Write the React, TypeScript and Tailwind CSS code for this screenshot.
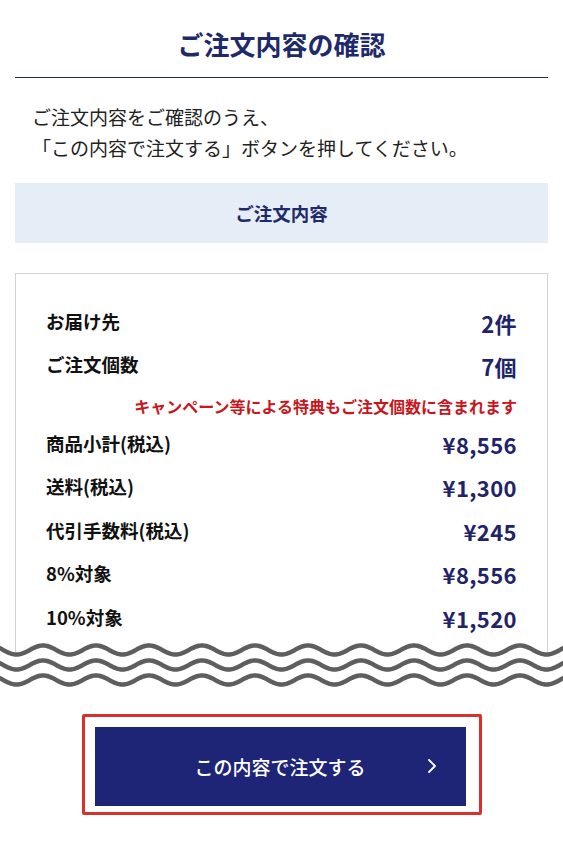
import React from "react";

const FONT = { fontFamily: '"Noto Sans CJK JP", "Noto Sans", sans-serif' };

function wavePath(cy: number, width: number, A: number, P: number, x0: number) {
  const pts: string[] = [];
  for (let x = -4; x <= width + 4; x += 1) {
    const y = cy - A * Math.cos((2 * Math.PI * (x - x0)) / P);
    pts.push(`${x === -4 ? "M" : "L"}${x.toFixed(1)},${y.toFixed(2)}`);
  }
  return pts.join(" ");
}

function Wave() {
  const W = 563;
  const A = 4.5;
  const P = 53;
  const x0 = 43;
  const lines = [10, 25, 40];
  const fill = wavePath(lines[0], W, A, P, x0) + ` L${W + 4},60 L-4,60 Z`;
  return (
    <svg width={W} height={54} viewBox={`0 0 ${W} 54`} className="block relative">
      <path d={fill} fill="#ffffff" />
      {lines.map((cy) => (
        <path
          key={cy}
          d={wavePath(cy, W, A, P, x0)}
          fill="none"
          stroke="#5e5e5e"
          strokeWidth={4.5}
          strokeLinecap="round"
        />
      ))}
    </svg>
  );
}

function Row({ label, value, h }: { label: string; value: string; h: string }) {
  return (
    <div className={`flex items-center justify-between ${h}`}>
      <span className="text-[18.5px] font-bold text-[#111111] leading-none">{label}</span>
      <span className="text-[22px] tracking-[0.4px] font-bold text-[#1f2468] leading-none translate-y-[1px]">
        {value}
      </span>
    </div>
  );
}

export default function App() {
  return (
    <div className="w-[563px] min-h-[860px] bg-white overflow-hidden" style={FONT}>
      <div className="mx-[15px]">
        <div className="h-[78px] pt-[11px] flex items-center justify-center border-b-[1.5px] border-[#1f2c4a]">
          <h1 className="text-[26px] font-bold text-[#1f2a6a] leading-none">ご注文内容の確認</h1>
        </div>
        <p className="mt-[23px] pl-[17px] text-[19px] leading-[31px] text-[#222222]">
          ご注文内容をご確認のうえ、
          <br />
          「この内容で注文する」ボタンを押してください。
        </p>
        <div className="mt-[20px] h-[60px] bg-[#e5edf7] flex items-center justify-center">
          <span className="text-[18.5px] font-bold text-[#1f2a6a] leading-none">ご注文内容</span>
        </div>
        <div className="mt-[30px] border border-[#d2d2d2] pt-[26px] pb-[22px] px-[30px]">
          <Row label="お届け先" value="2件" h="h-[43px]" />
          <Row label="ご注文個数" value="7個" h="h-[43px]" />
          <div className="h-[35px] pt-[5px] flex items-center justify-end">
            <span className="text-[16px] font-bold text-[#c8161d] leading-none">
              キャンペーン等による特典もご注文個数に含まれます
            </span>
          </div>
          <Row label="商品小計(税込)" value="¥8,556" h="h-[43.5px]" />
          <Row label="送料(税込)" value="¥1,300" h="h-[43.5px]" />
          <Row label="代引手数料(税込)" value="¥245" h="h-[43.5px]" />
          <Row label="8%対象" value="¥8,556" h="h-[43.5px]" />
          <Row label="10%対象" value="¥1,520" h="h-[43.5px]" />
        </div>
      </div>
      <div className="-mt-[22px]">
        <Wave />
      </div>
      <div className="mt-[20px] flex justify-center">
        <div className="w-[400px] border-[3px] border-[#d9302c] rounded-[2px] pt-[10px] pl-[10px] pr-[13px] pb-[6px]">
          <button className="relative w-[371px] h-[79px] bg-[#1e2476] flex items-center justify-center">
            <span className="text-white text-[19px] font-medium leading-none">この内容で注文する</span>
            <svg
              width="10"
              height="16"
              viewBox="0 0 10 16"
              className="absolute right-[29px] top-1/2 -translate-y-1/2 block"
            >
              <polyline
                points="2,2 8,8 2,14"
                fill="none"
                stroke="#ffffff"
                strokeWidth="1.8"
                strokeLinecap="round"
                strokeLinejoin="round"
              />
            </svg>
          </button>
        </div>
      </div>
    </div>
  );
}
